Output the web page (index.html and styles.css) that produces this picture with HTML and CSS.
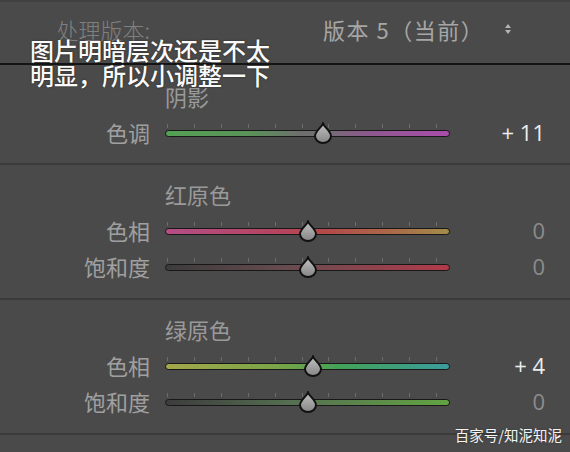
FILE: index.html
```html
<!DOCTYPE html>
<html lang="zh">
<head>
<meta charset="utf-8">
<title>HSL</title>
<link rel="stylesheet" href="styles.css">
</head>
<body>
<svg class="defs" width="0" height="0" aria-hidden="true">
  <defs>
    <linearGradient id="thumbfill" x1="0" y1="0" x2="0" y2="1">
      <stop offset="0" stop-color="#c2c2c2"/>
      <stop offset="1" stop-color="#858585"/>
    </linearGradient>
  </defs>
</svg>
<div class="panel">
  <div class="header">
    <span class="hdr-label">处理版本:</span>
    <span class="hdr-value">版本 5（当前）<svg class="updown" width="8" height="12" viewBox="0 0 8 12"><polygon points="4,1 7,5 1,5" /><polygon points="1,7 7,7 4,11" /></svg></span>
  </div>

  <section class="group g1">
    <div class="heading">阴影</div>
    <div class="row">
      <span class="label">色调</span>
      <div class="slider">
        <div class="ticks"></div>
        <div class="track tone"></div>
        <svg class="thumb" style="left:55.5%" width="21" height="22" viewBox="0 0 20 22"><path d="M10 1.5 C11 5 18 9 18 14 A8 7 0 0 1 2 14 C2 9 9 5 10 1.5 Z"/></svg>
      </div>
      <span class="value bright">+ 11</span>
    </div>
  </section>

  <section class="group">
    <div class="heading">红原色</div>
    <div class="row">
      <span class="label">色相</span>
      <div class="slider">
        <div class="ticks"></div>
        <div class="track red-hue"></div>
        <svg class="thumb" style="left:50%" width="21" height="22" viewBox="0 0 20 22"><path d="M10 1.5 C11 5 18 9 18 14 A8 7 0 0 1 2 14 C2 9 9 5 10 1.5 Z"/></svg>
      </div>
      <span class="value">0</span>
    </div>
    <div class="row">
      <span class="label">饱和度</span>
      <div class="slider">
        <div class="ticks"></div>
        <div class="track red-sat"></div>
        <svg class="thumb" style="left:50%" width="21" height="22" viewBox="0 0 20 22"><path d="M10 1.5 C11 5 18 9 18 14 A8 7 0 0 1 2 14 C2 9 9 5 10 1.5 Z"/></svg>
      </div>
      <span class="value">0</span>
    </div>
  </section>

  <section class="group">
    <div class="heading">绿原色</div>
    <div class="row">
      <span class="label">色相</span>
      <div class="slider">
        <div class="ticks"></div>
        <div class="track green-hue"></div>
        <svg class="thumb" style="left:52%" width="21" height="22" viewBox="0 0 20 22"><path d="M10 1.5 C11 5 18 9 18 14 A8 7 0 0 1 2 14 C2 9 9 5 10 1.5 Z"/></svg>
      </div>
      <span class="value bright">+ 4</span>
    </div>
    <div class="row">
      <span class="label">饱和度</span>
      <div class="slider">
        <div class="ticks"></div>
        <div class="track green-sat"></div>
        <svg class="thumb" style="left:50%" width="21" height="22" viewBox="0 0 20 22"><path d="M10 1.5 C11 5 18 9 18 14 A8 7 0 0 1 2 14 C2 9 9 5 10 1.5 Z"/></svg>
      </div>
      <span class="value">0</span>
    </div>
  </section>
</div>

<div class="note">图片明暗层次还是不太<br>明显，所以小调整一下</div>
<div class="watermark">百家号/知泥知泥</div>
</body>
</html>
```

FILE: styles.css
```css
html, body {
  margin: 0;
  padding: 0;
}
body {
  width: 570px;
  height: 452px;
  overflow: hidden;
  background: #4a4a4a;
  font-family: "Noto Sans CJK SC", "Noto Sans", sans-serif;
  position: relative;
}
.defs {
  position: absolute;
  width: 0;
  height: 0;
}
.panel {
  border-top: 2px solid #404040;
}
.header {
  height: 54px;
  padding-bottom: 7px;
  border-bottom: 2px solid #141414;
  display: grid;
  grid-template-columns: 150px 1fr;
  align-items: center;
}
.hdr-label {
  text-align: right;
  font-size: 22px;
  color: #808080;
  font-weight: 300;
}
.hdr-value {
  padding-left: 173px;
  font-size: 22px;
  letter-spacing: 1.5px;
  color: #a6a6a6;
  display: flex;
  align-items: center;
  white-space: nowrap;
}
.updown {
  margin-left: 20px;
  fill: #b4b4b4;
}
.group {
  padding: 11px 0 14px;
  border-bottom: 2px solid #3b3b3b;
}
.g1 {
  padding: 13px 0 13px;
}
.heading {
  padding-left: 165px;
  height: 36px;
  line-height: 36px;
  font-size: 22px;
  color: #9a9a9a;
  font-weight: 400;
}
.row {
  display: grid;
  grid-template-columns: 150px 285px 1fr;
  column-gap: 15px;
  height: 36px;
  align-items: center;
}
.label {
  text-align: right;
  font-size: 22px;
  color: #a0a0a0;
  font-weight: 400;
  line-height: 36px;
}
.value {
  text-align: right;
  padding-right: 25px;
  font-family: "Open Sans", "Liberation Sans", sans-serif;
  font-size: 22px;
  color: #8c8c8c;
  line-height: 36px;
}
.value.bright {
  color: #ececec;
}
.slider {
  position: relative;
  height: 36px;
  display: flex;
  align-items: center;
}
.ticks {
  position: absolute;
  left: 2px;
  width: 272px;
  top: 10px;
  height: 4px;
  background: repeating-linear-gradient(to right, #6c6c6c 0 1px, transparent 1px 26.9px);
}
.track {
  flex: 1;
  height: 5px;
  margin-top: 2px;
  border: 1.5px solid #181818;
  border-radius: 4px;
}
.tone {
  background: linear-gradient(to right, #55a055 0%, #5a9258 30%, #6e6e6e 48%, #707070 55%, #8a5a8c 70%, #aa4cab 100%);
}
.red-hue {
  background: linear-gradient(to right, #b44e86 0%, #b4445e 40%, #b2484a 55%, #aa6a48 80%, #a28c4a 100%);
}
.red-sat {
  background: linear-gradient(to right, #3c3c3c 0%, #6a4c50 45%, #b23a4a 100%);
}
.green-hue {
  background: linear-gradient(to right, #a4a84a 0%, #78a448 40%, #42a258 62%, #3a9c9e 100%);
}
.green-sat {
  background: linear-gradient(to right, #3c3c3c 0%, #567052 45%, #62a442 100%);
}
.thumb {
  position: absolute;
  top: 8px;
  transform: translateX(-50%);
  fill: url(#thumbfill);
  stroke: #111;
  stroke-width: 2;
}
.note {
  position: absolute;
  left: 30px;
  top: 37px;
  font-size: 24px;
  line-height: 25px;
  color: #fafafa;
  font-weight: 500;
  text-shadow: 0 0 2px #222;
  white-space: nowrap;
}
.watermark {
  position: absolute;
  right: 8px;
  bottom: 7px;
  font-size: 14.5px;
  color: #f4f4f4;
  text-shadow: 0 0 2px #333;
}
```
